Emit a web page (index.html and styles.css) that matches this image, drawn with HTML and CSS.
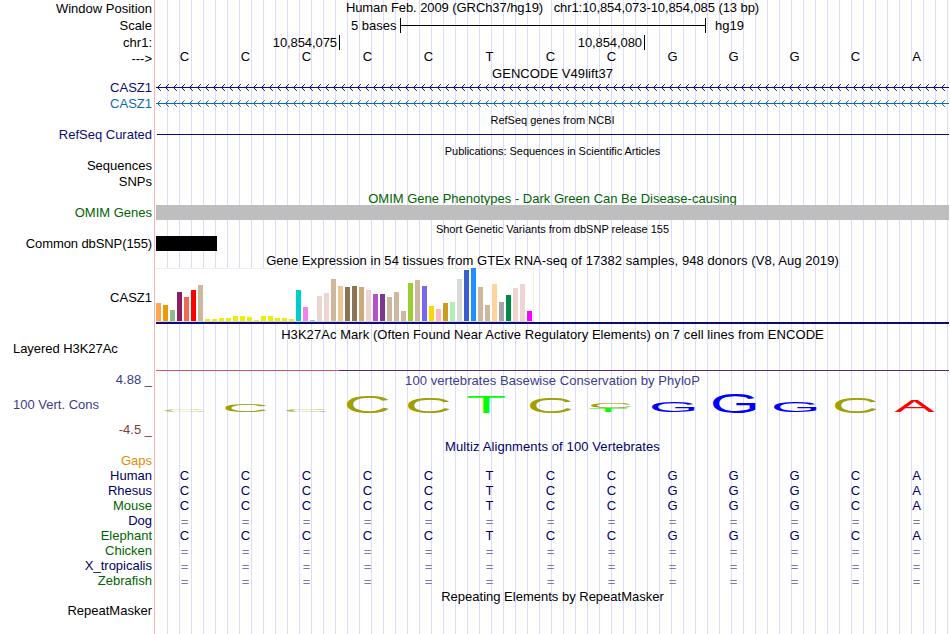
FILE: index.html
```html
<!DOCTYPE html>
<html lang="en">
<head>
<meta charset="utf-8">
<title>Genome Browser</title>
<link rel="stylesheet" href="styles.css">
</head>
<body>
<main class="browser">
  <div class="row h17"><div class="label">Window Position</div><div class="title up tight">Human Feb. 2009 (GRCh37/hg19) &nbsp; chr1:10,854,073-10,854,085 (13 bp)</div></div>
  <div class="row h17"><div class="label">Scale</div><div class="scale"><span class="scale-name">5 bases</span><span class="ruler"></span><span>hg19</span></div></div>
  <div class="row h17"><div class="label">chr1:</div><div class="ticks"><span class="tick tick-a">10,854,075</span><span class="tick tick-b">10,854,080</span></div></div>
  <div class="row h14"><div class="label">---&gt;</div><div class="seq raised" data-seq="CCCCCTCCGGGCA"></div></div>
  <div class="row h15"><div></div><div class="title low wide">GENCODE V49lift37</div></div>
  <div class="row h15"><div class="label navy">CASZ1</div><svg class="gene navy" width="793" height="15"></svg></div>
  <div class="row h17"><div class="label blue">CASZ1</div><svg class="gene blue" width="793" height="17"></svg></div>
  <div class="row h15"><div></div><div class="title small low">RefSeq genes from NCBI</div></div>
  <div class="row h15"><div class="label navy">RefSeq Curated</div><div class="line"></div></div>
  <div class="row h17"><div></div><div class="title small low tight">Publications: Sequences in Scientific Articles</div></div>
  <div class="row h15"><div class="label up">Sequences</div></div>
  <div class="row h17"><div class="label up">SNPs</div></div>
  <div class="row h14"><div></div><div class="title green">OMIM Gene Phenotypes - Dark Green Can Be Disease-causing</div></div>
  <div class="row h15"><div class="label green">OMIM Genes</div><div class="block omim"></div></div>
  <div class="row h16"><div></div><div class="title small low">Short Genetic Variants from dbSNP release 155</div></div>
  <div class="row h15"><div class="label narrow">Common dbSNP(155)</div><div class="block snp"></div></div>
  <div class="row h17"><div></div><div class="title low wide">Gene Expression in 54 tissues from GTEx RNA-seq of 17382 samples, 948 donors (V8, Aug 2019)</div></div>
  <div class="row gtex"><div class="label low">CASZ1</div><div class="gtex-track"><div class="bars"></div></div></div>
  <div class="row h20"><div></div><div class="title wide">H3K27Ac Mark (Often Found Near Active Regulatory Elements) on 7 cell lines from ENCODE</div></div>
  <div class="row signal"><div class="label left">Layered H3K27Ac</div><div class="baseline"></div></div>
  <div class="row cons">
    <div class="cons-labels"><span class="max">4.88 _</span><span class="name">100 Vert. Cons</span><span class="min">-4.5 _</span></div>
    <div class="cons-track"><div class="title periwinkle wide">100 vertebrates Basewise Conservation by PhyloP</div><svg class="logo" width="793" height="40"></svg></div>
  </div>
  <div class="row h14"><div></div><div class="title dark wider">Multiz Alignments of 100 Vertebrates</div></div>
  <div class="row h15"><div class="label orange">Gaps</div></div>
  <div class="row h15"><div class="label dark">Human</div><div class="seq dark" data-seq="CCCCCTCCGGGCA"></div></div>
  <div class="row h15"><div class="label dark">Rhesus</div><div class="seq dark" data-seq="CCCCCTCCGGGCA"></div></div>
  <div class="row h15"><div class="label green">Mouse</div><div class="seq dark" data-seq="CCCCCTCCGGGCA"></div></div>
  <div class="row h15"><div class="label dark">Dog</div><div class="seq faint" data-seq="============="></div></div>
  <div class="row h15"><div class="label green">Elephant</div><div class="seq dark" data-seq="CCCCCTCCGGGCA"></div></div>
  <div class="row h15"><div class="label green">Chicken</div><div class="seq faint" data-seq="============="></div></div>
  <div class="row h15"><div class="label dark">X_tropicalis</div><div class="seq faint" data-seq="============="></div></div>
  <div class="row h15"><div class="label green">Zebrafish</div><div class="seq faint" data-seq="============="></div></div>
  <div class="row h15"><div></div><div class="title low">Repeating Elements by RepeatMasker</div></div>
  <div class="row h15"><div class="label">RepeatMasker</div></div>
</main>
<script src="app.js"></script>
</body>
</html>
```
FILE: styles.css
```css
body { margin: 0; background: #fff; }
.browser {
  width: 950px; height: 634px; overflow: hidden;
  font: 13px/15px "Liberation Sans", sans-serif; color: #000;
  background:
    linear-gradient(#ffb4b4, #ffb4b4) 154px 0 / 1px 100% no-repeat,
    repeating-linear-gradient(90deg, transparent 0 11px, #dcdcff 11px 12px) 156px 0 / 793px 100% no-repeat;
}
.row { display: grid; grid-template: 100% / 152px 793px; column-gap: 4px; align-items: center; }
.h14 { height: 14px; }
.h15 { height: 15px; }
.h16 { height: 16px; }
.h17 { height: 17px; }
.h20 { height: 20px; }
.label { text-align: right; white-space: nowrap; }
.left { text-align: left; padding-left: 13px; letter-spacing: -.05px; }
.title { text-align: center; white-space: nowrap; }
.small { font-size: 11px; }
.up { margin-top: -2px; }
.low { padding-top: 2px; }
.tight { letter-spacing: -.08px; }
.small.tight { letter-spacing: -.05px; }
.narrow { letter-spacing: -.1px; }
.wide { letter-spacing: .06px; }
.wider { letter-spacing: .11px; }
.navy { color: #0c0c78; }
.blue { color: #0c6cb0; }
.green { color: #006400; }
.dark { color: #000064; }
.orange { color: #e68a00; }
.periwinkle { color: #3c3c8c; }

.scale { display: flex; align-items: center; white-space: nowrap; padding-left: 195px; }
.scale-name { width: 46px; }
.ruler {
  width: 306px; height: 15px; margin: 0 9px 0 3px; box-sizing: border-box;
  border: solid #000; border-width: 0 1px;
  background: linear-gradient(#000, #000) 0 7px / 100% 1px no-repeat;
}
.ticks { display: flex; letter-spacing: -.08px; }
.tick { height: 15px; text-align: right; border-right: 1px solid #000; padding-right: 2px; box-sizing: border-box; }
.tick-a { width: 184px; }
.tick-b { width: 305px; }
.seq { display: grid; grid-template-columns: repeat(13, 61px); margin-left: -2px; text-align: center; }
.raised { margin-top: -3px; }
.faint { color: #7878aa; padding-top: 2px; }
.gene { display: block; }
.line { height: 1px; background: #0c0c78; margin-left: 1px; }
.block { height: 15px; }
.omim { background: #bebebe; }
.snp { background: #000; width: 61px; }

.gtex { height: 56px; }
.gtex-track { height: 56px; box-sizing: border-box; border-bottom: 2px solid #0c0c78; }
.bars {
  width: 378px; height: 54px; box-sizing: border-box;
  display: flex; align-items: flex-end; gap: 2px; background: #fff;
  border-bottom: 1px solid #d8d8d8; box-shadow: inset 0 1px #eee, inset -1px 0 #eee;
}
.bar { width: 5px; flex: none; }
.signal { height: 27px; align-items: start; }
.signal .label { margin-top: -3px; }
.baseline { height: 1px; align-self: end; background: linear-gradient(90deg, #d2566e 183px, #5a2878 183px); }
.cons { height: 68px; align-items: start; }
.cons-labels { display: flex; flex-direction: column; }
.max { text-align: right; color: #3c3c8c; margin-top: 1px; }
.name { padding-left: 13px; color: #3c3c8c; margin-top: 10px; }
.min { text-align: right; color: #823c3c; margin-top: 10px; }
.cons-track { padding-top: 2px; }
.logo { display: block; }
```
FILE: app.js
```js
const NS = 'http://www.w3.org/2000/svg';

document.querySelectorAll('.seq').forEach(el => {
  for (const ch of el.dataset.seq) {
    const s = document.createElement('span');
    s.textContent = ch;
    el.append(s);
  }
});

// strand arrows along each transcript
document.querySelectorAll('.gene').forEach(svg => {
  const y = Math.floor(svg.getAttribute('height') / 2) + .5;
  const add = (d, width) => {
    const p = document.createElementNS(NS, 'path');
    p.setAttribute('d', d);
    p.setAttribute('fill', 'none');
    p.setAttribute('stroke', 'currentColor');
    p.setAttribute('stroke-width', width);
    svg.append(p);
  };
  let d = '';
  for (let x = 1; x < 790; x += 8) d += `M${x + 3.8} ${y - 3.3}L${x + .5} ${y}L${x + 3.8} ${y + 3.3}`;
  add(`M0 ${y}H793`, 1);
  add(d, 1);
});

const bars = [
  [18, '#ffa54f'], [16, '#ee9a00'], [11, '#8fbc8f'], [29, '#8b1c62'], [24, '#ee6a50'], [31, '#ff0000'], [36, '#cdb79e'],
  [2], [2], [3], [3], [5], [5], [4], [1], [5], [5], [3], [3], [2],
  [31, '#00cdcd'], [14, '#ee82ee'], [1, '#9ac0cd'], [25, '#eed5d2'], [28, '#eed5d2'], [42, '#cdb79e'], [35, '#eec591'],
  [34, '#8b7355'], [35, '#8b7355'], [34, '#cdaa7d'], [31, '#eed5d2'], [27, '#b452cd'], [27, '#7a378b'], [24, '#cdb79e'],
  [29, '#cdb79e'], [10, '#cdb79e'], [38, '#9acd32'], [41, '#cdb79e'], [35, '#7a67ee'], [15, '#ffd700'], [12, '#ffb6c1'],
  [18, '#cd9b1d'], [19, '#b4eeb4'], [42, '#d9d9d9'], [51, '#3a5fcd'], [53, '#1e90ff'], [34, '#cdb79e'], [16, '#cdb79e'],
  [37, '#ffd39b'], [19, '#a6a6a6'], [26, '#008b45'], [33, '#eed5d2'], [37, '#eed5d2'], [10, '#ff00ff']
];
for (const [h, color = '#eeee00'] of bars) {
  const b = document.createElement('div');
  b.className = 'bar';
  b.style.height = h + 'px';
  b.style.background = color;
  document.querySelector('.bars').append(b);
}

// letter, left, right, top, bottom (track pixels), opacity
const logo = [
  ['C', 9, 48.5, 21.7, 24, .6], ['C', 69.3, 110, 15.7, 24, 1], ['C', 130.5, 171, 20.8, 23.8, .8], ['C', 191, 232, 8, 25, 1],
  ['C', 252, 293, 9, 25, 1], ['T', 311.7, 348.7, 9, 25, 1], ['C', 374, 415, 9, 25, 1], ['C', 435, 475, 15, 20, 1],
  ['T', 433.3, 471, 20, 24, 1], ['G', 496, 539, 13, 24, 1], ['G', 557, 600, 5, 25, 1], ['G', 618, 661, 13, 24, 1],
  ['C', 679, 720, 9, 25, 1], ['A', 738.7, 778.7, 13, 24, 1]
];
// glyph extents in em: left, right, top, bottom
const box = { C: [.05, .677, .708, -.01], G: [.05, .716, .708, -.01], T: [.0225, .587, .688, 0], A: [.0015, .665, .688, 0] };
const fill = { C: '#a0a000', G: '#0000ff', T: '#00ff00', A: '#ff0000' };
for (const [ch, l, r, t, b, o] of logo) {
  const [x0, x1, y1, y0] = box[ch];
  const ex = (r - l) / (x1 - x0), ey = (b - t) / (y1 - y0);
  const e = document.createElementNS(NS, 'text');
  e.setAttribute('transform', `translate(${l - x0 * ex} ${b + y0 * ey}) scale(${ex / 100} ${ey / 100})`);
  e.setAttribute('font-size', '100');
  e.setAttribute('fill', fill[ch]);
  e.setAttribute('opacity', o);
  e.textContent = ch;
  document.querySelector('.logo').append(e);
}
```
